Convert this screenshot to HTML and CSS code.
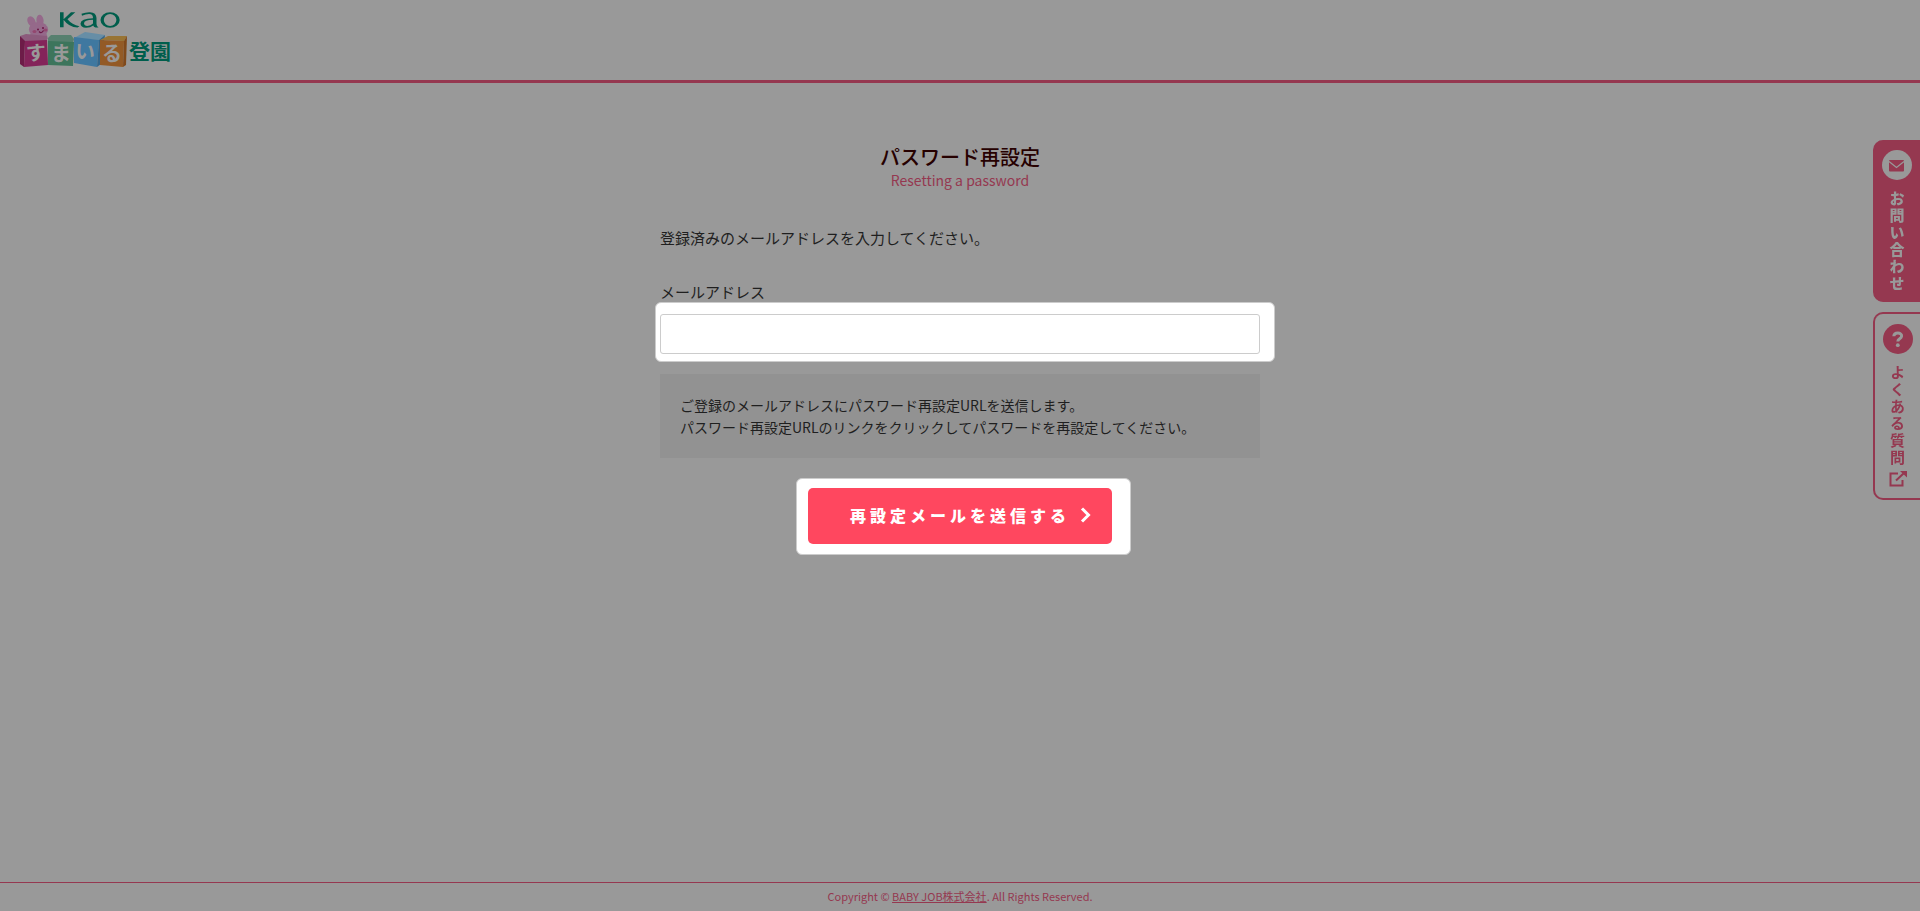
FILE: index.html
```
<!DOCTYPE html>
<html lang="ja">
<head>
<meta charset="utf-8">
<title>パスワード再設定</title>
<meta name="viewport" content="width=device-width, initial-scale=1">
<link rel="stylesheet" href="styles.css">
</head>
<body>
<header class="header">
  <a class="logo" href="#" aria-label="Kao すまいる登園">
    <svg class="logo-art" width="152" height="58" viewBox="19 11 152 58" aria-hidden="true">
      <g fill="#95698a">
        <ellipse cx="31.500" cy="21.500" rx="3.800" ry="5.500" transform="rotate(-28 31.500 21.500)"/>
        <ellipse cx="40" cy="20.500" rx="3.600" ry="5.800" transform="rotate(-6 40 20.500)"/>
        <ellipse cx="38.500" cy="29.500" rx="9.600" ry="7.600"/>
        <path d="M31 32h15l2 7H29z"/>
      </g>
      <ellipse cx="34.500" cy="31.500" rx="2" ry="1.500" fill="#93476f"/>
      <ellipse cx="45.500" cy="30" rx="2" ry="1.500" fill="#93476f"/>
      <circle cx="38" cy="29.500" r="1" fill="#6b1745"/>
      <circle cx="43" cy="28" r="1" fill="#6b1745"/>
      <path d="M39 31.500q2.500 2.500 4.500-1" fill="none" stroke="#6b1745" stroke-width="1.200"/>
      <path d="M20 36l6-2 21 2v5l-23 1z" fill="#8c5b7c"/>
      <path d="M20 36l5 5-1 26-4-3z" fill="#6d1c48"/>
      <path d="M25 41l22-1 1 25-24 2z" fill="#84245a"/>
      <path d="M48 38l3-3h20l3 4-1 4H48z" fill="#57806f"/>
      <path d="M48 41l26 1-1 24-25-1z" fill="#3d755c"/>
      <path d="M74 38l11-6 20 3-6 5z" fill="#678ea6"/>
      <path d="M74 37l25 3-2 27-23-4z" fill="#3f78a0"/>
      <path d="M99 40l6-5-4 29-4 3z" fill="#33658a"/>
      <path d="M100 40l8-4h19l-3 5z" fill="#987434"/>
      <path d="M100 40l24 1-1 26-23-2z" fill="#935a26"/>
      <path d="M124 41l3-5-1 29-3 2z" fill="#80491b"/>
      <g fill="#005e4c">
        <path d="M60 12.300h3.600v15H60zM71 12.300h4.300L67.500 19.300Q72 24.800 79.500 26.200L77.500 27.600Q69 27.300 63.300 19.500z"/>
        <path fill-rule="evenodd" d="M81.500 13.800Q86 12 90 12.200Q96.300 12.500 96.500 18V24Q96.600 26.500 98.500 27.500H95.500Q93.500 26.800 93.300 25.500Q90.500 27.800 86 27.800Q80.500 27.600 80.500 23.500Q80.800 18.500 93 18.200Q93.200 13.900 89 13.900Q85.500 13.900 82 15.800zM93 19.800Q84 20 84 23.300Q84.300 25.900 87.300 25.900Q91 25.700 93 23.500z"/>
        <path fill-rule="evenodd" d="M100.500 20a9.600 7.800 0 1 0 19.200 0a9.600 7.800 0 1 0-19.200 0zM103.800 20a6.300 6 0 1 1 12.600 0a6.300 6 0 1 1-12.600 0z"/>
      </g>
      <g class="logo-kana" text-anchor="middle">
        <text x="36" y="60" transform="rotate(-4 36 53)">す</text>
        <text x="61" y="61">ま</text>
        <text x="85" y="59" transform="rotate(5 85 52)">い</text>
        <text x="112" y="61">る</text>
      </g>
      <text class="logo-name" x="129" y="59">登園</text>
    </svg>
  </a>
</header>

<main class="main">
  <h1 class="title">パスワード再設定</h1>
  <p class="subtitle">Resetting a password</p>
  <p class="lead">登録済みのメールアドレスを入力してください。</p>
  <form class="form">
    <label class="label" for="email">メールアドレス</label>
    <div class="spot spot-field">
      <input class="input" id="email" type="email">
    </div>
    <p class="note">ご登録のメールアドレスにパスワード再設定URLを送信します。<br>パスワード再設定URLのリンクをクリックしてパスワードを再設定してください。</p>
    <div class="spot spot-button">
      <button class="submit" type="button">
        <span>再設定メールを送信する</span>
        <svg width="11" height="16" viewBox="0 0 11 16" aria-hidden="true"><path d="M2 1.500L8.500 8 2 14.500" fill="none" stroke="#fff" stroke-width="3"/></svg>
      </button>
    </div>
  </form>
</main>

<nav class="side">
  <a class="tab tab-contact" href="#">
    <svg width="30" height="30" viewBox="0 0 30 30" aria-hidden="true">
      <circle cx="15" cy="15" r="15" fill="#999"/>
      <rect x="7" y="10" width="15" height="11.500" rx="1" fill="#953850"/>
      <path d="M7 11.500l7.500 6 7.500-6" fill="none" stroke="#999" stroke-width="1.300"/>
    </svg>
    <span class="tab-text">お問い合わせ</span>
  </a>
  <a class="tab tab-faq" href="#">
    <svg width="30" height="30" viewBox="0 0 30 30" aria-hidden="true">
      <circle cx="15" cy="15" r="15" fill="#953850"/>
      <path d="M10.800 12.300C11 8 19 8 18.600 12.200c-.3 2.800-3.800 2.300-3.800 5.300" fill="none" stroke="#999" stroke-width="3"/>
      <circle cx="14.800" cy="21.200" r="1.900" fill="#999"/>
    </svg>
    <span class="tab-text">よくある質問</span>
    <svg width="18" height="16" viewBox="0 0 18 16" aria-hidden="true">
      <path d="M9 2.500H1.500v12h12V9M7 9.500L14.500 2.500" fill="none" stroke="#953850" stroke-width="2"/>
      <path d="M11 0h7v6.500z" fill="#953850"/>
    </svg>
  </a>
</nav>

<footer class="footer">
  <small class="copyright">Copyright © <a class="footer-link" href="#">BABY JOB株式会社</a>. All Rights Reserved.</small>
</footer>
</body>
</html>
```
FILE: styles.css
```
* {
  box-sizing: border-box;
}

body {
  display: flex;
  flex-direction: column;
  min-height: 100vh;
  margin: 0;
  background: #999;
  color: #1f1f1f;
  font-family: "Noto Sans CJK JP", sans-serif;
  font-size: 15px;
  line-height: 22px;
}

.header {
  padding: 11px 19px;
  border-bottom: 3px solid #953850;
}

.logo,
.logo-art {
  display: block;
}

.logo {
  width: 152px;
}

.logo-kana {
  fill: #999;
  font-size: 20px;
  font-weight: 700;
}

.logo-name {
  fill: #005e4c;
  font-size: 21px;
  font-weight: 700;
}

.main {
  flex: 1;
  width: 100%;
  max-width: 600px;
  margin: 0 auto;
  padding-top: 61px;
}

.title {
  margin: 0;
  color: #260000;
  font-size: 20px;
  font-weight: 500;
  line-height: 26px;
  text-align: center;
}

.subtitle {
  margin: 0;
  color: #953850;
  font-size: 14px;
  line-height: 20px;
  text-align: center;
}

.lead {
  margin: 37px 0 33px;
}

.label {
  display: block;
  line-height: 20px;
}

.spot {
  border: 1px solid #ccc;
  border-radius: 6px;
  background: #fff;
}

.spot-field {
  margin: 0 -15px 0 -5px;
  padding: 11px 14px 7px 4px;
}

.input {
  display: block;
  width: 100%;
  height: 40px;
  padding: 0 10px;
  border: 1px solid #ccc;
  border-radius: 3px;
  background: #fff;
  font: inherit;
}

.note {
  margin: 12px 0 20px;
  padding: 20px;
  background: #929292;
  font-size: 14px;
}

.spot-button {
  width: 335px;
  margin-left: calc(50% - 164px);
  padding: 9px 18px 10px 11px;
}

.submit {
  display: flex;
  align-items: center;
  justify-content: flex-end;
  gap: 10px;
  width: 100%;
  height: 56px;
  padding: 0 21px 3px;
  border: 0;
  border-radius: 5px;
  background: #ff475f;
  color: #fff;
  font: inherit;
  font-size: 16px;
  font-weight: 900;
  letter-spacing: 4px;
}

.side {
  position: fixed;
  top: 140px;
  right: 0;
  display: grid;
  gap: 10px;
  width: 47px;
}

.tab {
  display: flex;
  flex-direction: column;
  align-items: center;
  padding: 10px 0;
  border: 2px solid #953850;
  border-right: 0;
  border-radius: 10px 0 0 10px;
  font-weight: 700;
  text-decoration: none;
}

.tab-contact {
  padding: 10px 2px 9px 0;
  border-top: 0;
  border-bottom: 0;
  background: #953850;
  color: #999;
  font-weight: 900;
}

.tab-faq {
  color: #953850;
}

.tab-text {
  margin: 11px 0 0;
  writing-mode: vertical-rl;
  letter-spacing: 2px;
}

.tab-faq .tab-text {
  margin: 11px 1px 4px 0;
}

.tab-faq {
  padding-bottom: 11px;
}

.footer {
  padding: 2px 0 4px;
  border-top: 1px solid #953850;
  color: #953850;
  text-align: center;
}

.copyright {
  display: block;
  font-size: 11px;
}

.footer-link {
  color: inherit;
}
```
